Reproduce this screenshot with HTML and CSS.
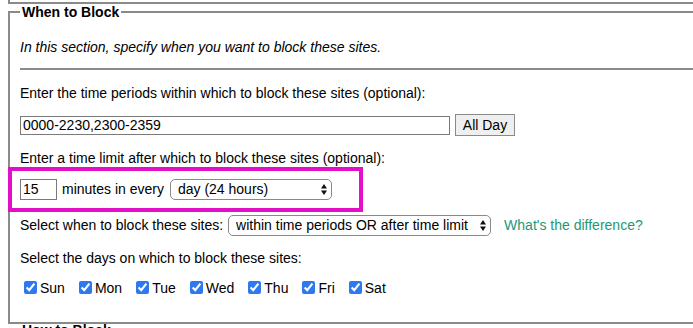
FILE: index.html
```html
<!DOCTYPE html>
<html>
<head>
<meta charset="utf-8">
<link rel="stylesheet" href="styles.css">
</head>
<body>
<div class="prev"></div>
<fieldset class="section">
  <legend>When to Block</legend>
  <p class="intro">In this section, specify when you want to block these sites.</p>
  <hr class="rule">
  <p class="q q1">Enter the time periods within which to block these sites (optional):</p>
  <div class="row r1">
    <input class="field times" type="text" value="0000-2230,2300-2359">
    <button class="btn" type="button">All Day</button>
  </div>
  <p class="q q2">Enter a time limit after which to block these sites (optional):</p>
  <div class="row r2">
    <span class="highlight"></span>
    <input class="field mins" type="text" value="15">
    <span>minutes in every</span>
    <span class="sel sel-period">
      <select class="dropdown"><option>day (24 hours)</option></select>
      <svg class="arrows" width="6" height="11" viewBox="0 0 6 11"><path d="M0 4.5 L3 0 L6 4.5Z M0 6.5 L3 11 L6 6.5Z" fill="#111"/></svg>
    </span>
  </div>
  <div class="row r3">
    <span>Select when to block these sites:</span>
    <span class="sel sel-mode">
      <select class="dropdown"><option>within time periods OR after time limit</option></select>
      <svg class="arrows" width="6" height="11" viewBox="0 0 6 11"><path d="M0 4.5 L3 0 L6 4.5Z M0 6.5 L3 11 L6 6.5Z" fill="#111"/></svg>
    </span>
    <a class="link" href="#">What's the difference?</a>
  </div>
  <p class="q q4">Select the days on which to block these sites:</p>
  <div class="days">
    <label class="day"><input type="checkbox" checked>Sun</label>
    <label class="day"><input type="checkbox" checked>Mon</label>
    <label class="day"><input type="checkbox" checked>Tue</label>
    <label class="day"><input type="checkbox" checked>Wed</label>
    <label class="day"><input type="checkbox" checked>Thu</label>
    <label class="day"><input type="checkbox" checked>Fri</label>
    <label class="day"><input type="checkbox" checked>Sat</label>
  </div>
</fieldset>
<fieldset class="section next">
  <legend>How to Block</legend>
</fieldset>
</body>
</html>
```
FILE: styles.css
```css
html {
  overflow: hidden;
  background: #fff;
}
body {
  margin: 0;
  width: 820px;
  font-family: "Liberation Sans", Arial, sans-serif;
  font-size: 14px;
  line-height: 16px;
  color: #000;
}
.prev {
  margin-left: 8px;
  height: 2px;
  border-left: 2px solid #8a8a8a;
  border-bottom: 2px solid #8a8a8a;
}
.section {
  margin: 0 0 0 8px;
  padding: 0 10px 25px;
  border: 2px solid #8a8a8a;
  min-width: 0;
}
.section legend {
  padding: 0 2px;
  font-weight: bold;
  line-height: 16px;
}
.next {
  margin-top: -2px;
  padding-bottom: 20px;
}
p {
  margin: 0;
}
.intro {
  margin-top: 19px;
  font-style: italic;
}
.rule {
  margin: 13px 0 0;
  height: 0;
  border: 0;
  border-top: 2px solid #8a8a8a;
}
.q1 { margin-top: 15px; }
.q2 { margin-top: 14px; }
.q4 { margin-top: 14px; }
.row {
  display: flex;
  align-items: center;
  height: 22px;
  gap: 5px;
}
.r1 { margin-top: 13px; }
.r2 { margin-top: 12px; position: relative; }
.r3 { margin-top: 14px; gap: 5px; }
.field {
  box-sizing: border-box;
  height: 19px;
  margin: 0;
  padding: 0 2px;
  border: 1px solid #7a7a7a;
  font-family: "Liberation Sans", Arial, sans-serif;
  font-size: 14px;
  color: #000;
}
.times { width: 430px; }
.mins { width: 37px; height: 21px; }
.btn {
  box-sizing: border-box;
  width: 60px;
  height: 22px;
  margin: 0;
  padding: 0;
  background: #efefef;
  border: 1px solid #8a8a8a;
  font-family: "Liberation Sans", Arial, sans-serif;
  font-size: 14px;
  color: #000;
}
.sel {
  position: relative;
  display: inline-flex;
}
.sel-period { margin-left: 1px; }
.dropdown {
  -webkit-appearance: none;
  appearance: none;
  box-sizing: border-box;
  height: 21px;
  margin: 0;
  padding: 0 20px 0 7px;
  background: #fff;
  border: 1px solid #8a8a8a;
  border-radius: 5px;
  font-family: "Liberation Sans", Arial, sans-serif;
  font-size: 14px;
  color: #000;
}
.sel-period .dropdown { width: 162px; }
.sel-mode .dropdown { width: 263px; }
.arrows {
  position: absolute;
  right: 5px;
  top: 5px;
}
.link {
  margin-left: 8px;
  color: #1e9878;
  text-decoration: none;
}
.highlight {
  position: absolute;
  left: -12px;
  top: -11px;
  width: 355px;
  height: 45px;
  box-sizing: border-box;
  border: 4px solid #e20fc6;
  pointer-events: none;
}
.days {
  margin-top: 12px;
  height: 19px;
  display: flex;
  align-items: center;
  gap: 10px;
}
.day {
  display: flex;
  align-items: center;
}
.day input {
  width: 13px;
  height: 13px;
  margin: 0 3px 0 4px;
  accent-color: #2f79f0;
}
```
